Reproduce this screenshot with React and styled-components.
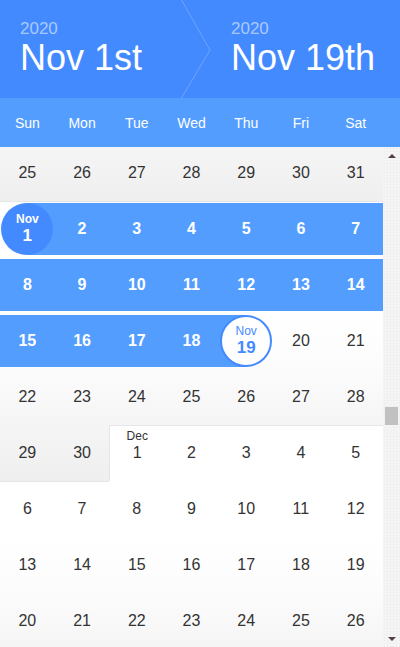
import React from "react";
import styled, { createGlobalStyle, css } from "styled-components";

const BLUE = "#448aff";
const BAND = "#539dff";
const INK = "#333";

const GlobalStyle = createGlobalStyle`
  html, body {
    margin: 0;
    padding: 0;
    background: #fff;
  }
  body {
    font-family: "Liberation Sans", Arial, sans-serif;
  }
`;

const Picker = styled.div`
  width: 400px;
  height: 647px;
  display: flex;
  flex-direction: column;
  overflow: hidden;
`;

// top summary: start date > end date
const Header = styled.header`
  height: 98px;
  flex: none;
  display: flex;
  background: ${BLUE};
`;

const HeaderSide = styled.div`
  box-sizing: border-box;
  width: ${(p) => p.$width || "auto"};
  padding: 19px 0 0 ${(p) => p.$indent}px;
`;

const Year = styled.div`
  font-size: 17px;
  line-height: 20px;
  color: rgba(255, 255, 255, 0.55);
`;

const BigDate = styled.div`
  margin-top: -1px;
  font-size: 36px;
  line-height: 40px;
  color: #fff;
  white-space: nowrap;
`;

const Chevron = () => (
  <svg width="30" height="98" viewBox="0 0 30 98" style={{ flex: "none" }}>
    <polyline
      points="0.5,0 29,50 0.5,98"
      fill="none"
      stroke="rgba(255,255,255,0.22)"
      strokeWidth="1"
    />
  </svg>
);

const Weekdays = styled.div`
  height: 49px;
  flex: none;
  display: grid;
  grid-template-columns: repeat(7, 1fr);
  padding-right: 17px;
  background: ${BAND};
`;

const Weekday = styled.div`
  display: flex;
  align-items: center;
  justify-content: center;
  font-size: 14px;
  color: #fff;
`;

const Body = styled.div`
  flex: 1;
  display: flex;
  overflow: hidden;
`;

const Grid = styled.div`
  flex: 1;
  margin-top: -2px;
  display: grid;
  grid-template-columns: repeat(7, 1fr);
  grid-auto-rows: 56px;
  align-content: start;
`;

const Cell = styled.div`
  box-sizing: border-box;
  display: flex;
  padding: ${(p) => (p.$edgeTop ? "1px" : "2px")} 0 2px;
  border-top: ${(p) => (p.$edgeTop ? "1px solid #e6e6e6" : "none")};
  border-left: ${(p) => (p.$edgeLeft ? "1px solid #e6e6e6" : "none")};
`;

const bands = {
  mid: css`background: ${BAND};`,
  start: css`background: linear-gradient(to right, transparent 50%, ${BAND} 50%);`,
  end: css`background: linear-gradient(to right, ${BAND} 50%, transparent 50%);`,
};

const Slot = styled.div`
  flex: 1;
  display: flex;
  align-items: center;
  justify-content: center;
  ${(p) => p.$band && bands[p.$band]}
`;

const DayNumber = styled.div`
  position: relative;
  font-size: 16px;
  line-height: 20px;
  color: ${(p) => (p.$inRange ? "#fff" : INK)};
  font-weight: ${(p) => (p.$inRange ? "bold" : "normal")};
`;

const MonthTag = styled.span`
  position: absolute;
  bottom: 100%;
  left: 50%;
  transform: translateX(-50%);
  font-size: 12px;
  line-height: 14px;
`;

const Circle = styled.div`
  box-sizing: border-box;
  width: 52px;
  height: 52px;
  border-radius: 50%;
  display: flex;
  flex-direction: column;
  align-items: center;
  justify-content: center;
  ${(p) =>
    p.$filled
      ? css`
          background: ${BLUE};
          color: #fff;
          font-weight: bold;
        `
      : css`
          background: #fff;
          border: 2px solid ${BLUE};
          color: ${BLUE};
        `}
`;

const CircleMonth = styled.div`
  font-size: 12px;
  line-height: 14px;
`;

const CircleDay = styled.div`
  font-size: 17px;
  line-height: 20px;
  font-weight: bold;
`;

const ScrollBar = styled.div`
  width: 17px;
  flex: none;
  display: flex;
  flex-direction: column;
  background-color: #f4f4f4;
  background-image: radial-gradient(#e9e9e9 0.7px, transparent 0.8px);
  background-size: 3px 3px;
`;

const ArrowButton = styled.div`
  height: 17px;
  display: flex;
  align-items: center;
  justify-content: center;

  &::after {
    content: "";
    border-left: 4px solid transparent;
    border-right: 4px solid transparent;
    ${(p) =>
      p.$down
        ? css`border-top: 4px solid #503e4b;`
        : css`border-bottom: 4px solid #503e4b;`}
  }
`;

const Track = styled.div`
  flex: 1;
`;

const Thumb = styled.div`
  margin: ${(p) => p.$offset}px 2px 0;
  height: 18px;
  background: #c1c1c1;
`;

const WEEKDAYS = ["Sun", "Mon", "Tue", "Wed", "Thu", "Fri", "Sat"];
const MONTHS = ["Jan", "Feb", "Mar", "Apr", "May", "Jun", "Jul", "Aug", "Sep", "Oct", "Nov", "Dec"];

const rangeStart = new Date(2020, 10, 1);
const rangeEnd = new Date(2020, 10, 19);

// months fade from white into grey towards their last week
const shade = (t) => {
  const v = t <= 0.5 ? 255 : Math.round(255 - 16 * ((t - 0.5) / 0.5));
  return `rgb(${v},${v},${v})`;
};

function buildDays(from, weeks) {
  const days = [];
  for (let i = 0; i < weeks * 7; i++) {
    const date = new Date(from.getFullYear(), from.getMonth(), from.getDate() + i);
    const y = date.getFullYear();
    const m = date.getMonth();
    const d = date.getDate();
    const first = new Date(y, m, 1).getDay();
    const len = new Date(y, m + 1, 0).getDate();
    const rows = Math.ceil((first + len) / 7);
    const row = Math.floor((first + d - 1) / 7);

    let band = null;
    if (date >= rangeStart && date <= rangeEnd) {
      band = +date === +rangeStart ? "start" : +date === +rangeEnd ? "end" : "mid";
    }

    days.push({
      key: i,
      month: m,
      day: d,
      band,
      edgeTop: d <= 7,
      edgeLeft: d === 1 && date.getDay() !== 0,
      bg: `linear-gradient(${shade(row / rows)}, ${shade((row + 1) / rows)})`,
    });
  }
  return days;
}

const days = buildDays(new Date(2020, 9, 25), 9);

function Day({ item }) {
  const { band, month, day } = item;

  if (band === "start" || band === "end") {
    return (
      <Circle $filled={band === "start"}>
        <CircleMonth>{MONTHS[month]}</CircleMonth>
        <CircleDay>{day}</CircleDay>
      </Circle>
    );
  }

  return (
    <DayNumber $inRange={band === "mid"}>
      {day === 1 && <MonthTag>{MONTHS[month]}</MonthTag>}
      {day}
    </DayNumber>
  );
}

export default function App() {
  return (
    <>
      <GlobalStyle />
      <Picker>
        <Header>
          <HeaderSide $width="181px" $indent={20}>
            <Year>2020</Year>
            <BigDate>Nov 1st</BigDate>
          </HeaderSide>
          <Chevron />
          <HeaderSide $indent={20}>
            <Year>2020</Year>
            <BigDate>Nov 19th</BigDate>
          </HeaderSide>
        </Header>

        <Weekdays>
          {WEEKDAYS.map((w) => (
            <Weekday key={w}>{w}</Weekday>
          ))}
        </Weekdays>

        <Body>
          <Grid>
            {days.map((item) => (
              <Cell
                key={item.key}
                $edgeTop={item.edgeTop}
                $edgeLeft={item.edgeLeft}
                style={{ background: item.bg }}
              >
                <Slot $band={item.band}>
                  <Day item={item} />
                </Slot>
              </Cell>
            ))}
          </Grid>
          <ScrollBar>
            <ArrowButton />
            <Track>
              <Thumb $offset={243} />
            </Track>
            <ArrowButton $down />
          </ScrollBar>
        </Body>
      </Picker>
    </>
  );
}
